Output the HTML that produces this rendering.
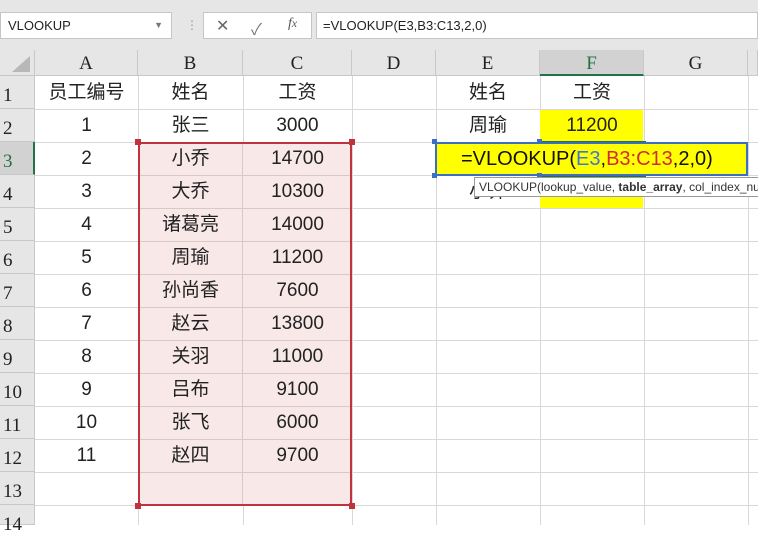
<!DOCTYPE html>
<html><head><meta charset="utf-8"><style>
*{margin:0;padding:0;box-sizing:border-box}
body{width:758px;height:525px;overflow:hidden;background:#fff;font-family:"Liberation Sans","Noto Sans CJK SC",sans-serif;position:relative}
.a{position:absolute}
.top{left:0;top:0;width:758px;height:50px;background:#e6e6e6}
.nb{left:0;top:12px;width:172px;height:27px;background:#fff;border:1px solid #c6c6c6;font-size:13px;line-height:25px;padding-left:7px;color:#222}
.fx{left:203px;top:12px;width:109px;height:27px;background:#fff;border:1px solid #c6c6c6}
.fb{left:316px;top:12px;width:442px;height:27px;background:#fff;border:1px solid #c6c6c6;font-size:13px;line-height:25px;padding-left:6px;color:#222}
.ch{top:50px;height:26px;background:#e6e6e6;border-right:1px solid #c8c8c8;border-bottom:1px solid #c8c8c8;font-family:"Liberation Serif",serif;font-size:19px;text-align:center;line-height:28px;color:#222}
.rh{left:0;width:35px;height:33px;background:#e6e6e6;border-bottom:1px solid #c8c8c8;border-right:1px solid #c8c8c8;font-family:"Liberation Serif",serif;font-size:19px;line-height:40px;padding-left:3px;color:#222}
.vl{top:76px;width:1px;height:449px;background:#d8d8d8}
.hl{left:35px;width:723px;height:1px;background:#d8d8d8}
.c{font-size:19px;text-align:center;height:33px;line-height:34px;color:#222}
</style></head><body>
<div class="a top"></div>
<div class="a nb">VLOOKUP<span style="position:absolute;right:8px;top:0;font-size:9px;color:#777">▼</span></div>
<div class="a" style="left:186px;top:18px;color:#999;font-size:12px">⋮</div>
<div class="a fx"><span class="a" style="left:12px;top:3px;font-size:16px;color:#666">✕</span><span class="a" style="left:47px;top:3px;font-size:16px;color:#777">✓</span><span class="a" style="left:84px;top:3px;font-size:14px;font-style:italic;font-family:'Liberation Serif',serif;color:#555">f<small>x</small></span></div>
<div class="a fb">=VLOOKUP(E3,B3:C13,2,0)</div>
<div class="a" style="left:0;top:50px;width:35px;height:26px;background:#e6e6e6;border-right:1px solid #c8c8c8;border-bottom:1px solid #c8c8c8"></div>
<div class="a" style="left:12px;top:56px;width:0;height:0;border-left:18px solid transparent;border-bottom:16px solid #b8b8b8"></div>
<div class="a ch" style="left:35px;width:103px">A</div>
<div class="a ch" style="left:138px;width:105px">B</div>
<div class="a ch" style="left:243px;width:109px">C</div>
<div class="a ch" style="left:352px;width:84px">D</div>
<div class="a ch" style="left:436px;width:104px">E</div>
<div class="a ch" style="left:540px;width:104px;background:#d2d2d2;border-bottom:2px solid #217346;color:#217346">F</div>
<div class="a ch" style="left:644px;width:104px">G</div>
<div class="a ch" style="left:748px;width:10px"></div>
<div class="a" style="left:0;top:76px;width:35px;height:449px;background:#e6e6e6"></div>
<div class="a vl" style="left:138px"></div><div class="a vl" style="left:243px"></div><div class="a vl" style="left:352px"></div><div class="a vl" style="left:436px"></div><div class="a vl" style="left:540px"></div><div class="a vl" style="left:644px"></div><div class="a vl" style="left:748px"></div>
<div class="a hl" style="top:109px"></div><div class="a hl" style="top:142px"></div><div class="a hl" style="top:175px"></div><div class="a hl" style="top:208px"></div><div class="a hl" style="top:241px"></div><div class="a hl" style="top:274px"></div><div class="a hl" style="top:307px"></div><div class="a hl" style="top:340px"></div><div class="a hl" style="top:373px"></div><div class="a hl" style="top:406px"></div><div class="a hl" style="top:439px"></div><div class="a hl" style="top:472px"></div><div class="a hl" style="top:505px"></div>
<div class="a rh" style="top:76px">1</div><div class="a rh" style="top:109px">2</div><div class="a rh" style="top:142px;background:#d2d2d2;color:#217346;border-right:2px solid #217346">3</div><div class="a rh" style="top:175px">4</div><div class="a rh" style="top:208px">5</div><div class="a rh" style="top:241px">6</div><div class="a rh" style="top:274px">7</div><div class="a rh" style="top:307px">8</div><div class="a rh" style="top:340px">9</div><div class="a rh" style="top:373px">10</div><div class="a rh" style="top:406px">11</div><div class="a rh" style="top:439px">12</div><div class="a rh" style="top:472px">13</div><div class="a rh" style="top:505px;height:20px">14</div>
<div class="a" style="left:138px;top:142px;width:214px;height:364px;background:#f8e8e8;border:2px solid #c0323c"></div>
<div class="a" style="left:242px;top:144px;width:1px;height:360px;background:#d8c8c8"></div>
<div class="a" style="left:140px;top:175px;width:210px;height:330px;background:repeating-linear-gradient(to bottom,#d8c8c8 0,#d8c8c8 1px,transparent 1px,transparent 33px)"></div>
<div class="a" style="left:135px;top:139px;width:6px;height:6px;background:#c0323c"></div><div class="a" style="left:349px;top:139px;width:6px;height:6px;background:#c0323c"></div><div class="a" style="left:135px;top:503px;width:6px;height:6px;background:#c0323c"></div><div class="a" style="left:349px;top:503px;width:6px;height:6px;background:#c0323c"></div>
<div class="a" style="left:540px;top:110px;width:103px;height:32px;background:#ffff00"></div>
<div class="a" style="left:540px;top:176px;width:103px;height:32px;background:#ffff00"></div>
<div class="a c" style="left:35px;top:76px;width:103px">员工编号</div>
<div class="a c" style="left:138px;top:76px;width:105px">姓名</div>
<div class="a c" style="left:243px;top:76px;width:109px">工资</div>
<div class="a c" style="left:436px;top:76px;width:104px">姓名</div>
<div class="a c" style="left:540px;top:76px;width:104px">工资</div>
<div class="a c" style="left:436px;top:109px;width:104px">周瑜</div>
<div class="a c" style="left:540px;top:109px;width:104px">11200</div>
<div class="a c" style="left:436px;top:175px;width:104px">小乔</div>
<div class="a c" style="left:35px;top:109px;width:103px">1</div><div class="a c" style="left:138px;top:109px;width:105px">张三</div><div class="a c" style="left:243px;top:109px;width:109px">3000</div>
<div class="a c" style="left:35px;top:142px;width:103px">2</div><div class="a c" style="left:138px;top:142px;width:105px">小乔</div><div class="a c" style="left:243px;top:142px;width:109px">14700</div>
<div class="a c" style="left:35px;top:175px;width:103px">3</div><div class="a c" style="left:138px;top:175px;width:105px">大乔</div><div class="a c" style="left:243px;top:175px;width:109px">10300</div>
<div class="a c" style="left:35px;top:208px;width:103px">4</div><div class="a c" style="left:138px;top:208px;width:105px">诸葛亮</div><div class="a c" style="left:243px;top:208px;width:109px">14000</div>
<div class="a c" style="left:35px;top:241px;width:103px">5</div><div class="a c" style="left:138px;top:241px;width:105px">周瑜</div><div class="a c" style="left:243px;top:241px;width:109px">11200</div>
<div class="a c" style="left:35px;top:274px;width:103px">6</div><div class="a c" style="left:138px;top:274px;width:105px">孙尚香</div><div class="a c" style="left:243px;top:274px;width:109px">7600</div>
<div class="a c" style="left:35px;top:307px;width:103px">7</div><div class="a c" style="left:138px;top:307px;width:105px">赵云</div><div class="a c" style="left:243px;top:307px;width:109px">13800</div>
<div class="a c" style="left:35px;top:340px;width:103px">8</div><div class="a c" style="left:138px;top:340px;width:105px">关羽</div><div class="a c" style="left:243px;top:340px;width:109px">11000</div>
<div class="a c" style="left:35px;top:373px;width:103px">9</div><div class="a c" style="left:138px;top:373px;width:105px">吕布</div><div class="a c" style="left:243px;top:373px;width:109px">9100</div>
<div class="a c" style="left:35px;top:406px;width:103px">10</div><div class="a c" style="left:138px;top:406px;width:105px">张飞</div><div class="a c" style="left:243px;top:406px;width:109px">6000</div>
<div class="a c" style="left:35px;top:439px;width:103px">11</div><div class="a c" style="left:138px;top:439px;width:105px">赵四</div><div class="a c" style="left:243px;top:439px;width:109px">9700</div>
<div class="a" style="left:540px;top:141px;width:106px;height:36px;border:2px solid #217346"></div>
<div class="a" style="left:435px;top:142px;width:313px;height:34px;background:#ffff00;border:2px solid #3b6fc4"></div>
<div class="a" style="left:432px;top:139px;width:5px;height:5px;background:#3b6fc4"></div><div class="a" style="left:537px;top:139px;width:5px;height:5px;background:#3b6fc4"></div><div class="a" style="left:432px;top:173px;width:5px;height:5px;background:#3b6fc4"></div><div class="a" style="left:537px;top:173px;width:5px;height:5px;background:#3b6fc4"></div>
<div class="a" style="left:461px;top:143px;font-size:20px;line-height:33px;color:#111">=VLOOKUP(<span style="color:#3b78d8">E3</span>,<span style="color:#d02b3c">B3:C13</span>,2,0)</div>
<div class="a" style="left:474px;top:177px;width:290px;height:20px;background:#fff;border:1px solid #999;font-size:12px;line-height:18px;padding-left:4px;color:#333;white-space:nowrap;overflow:hidden">VLOOKUP(lookup_value, <b>table_array</b>, col_index_num</div>
</body></html>
